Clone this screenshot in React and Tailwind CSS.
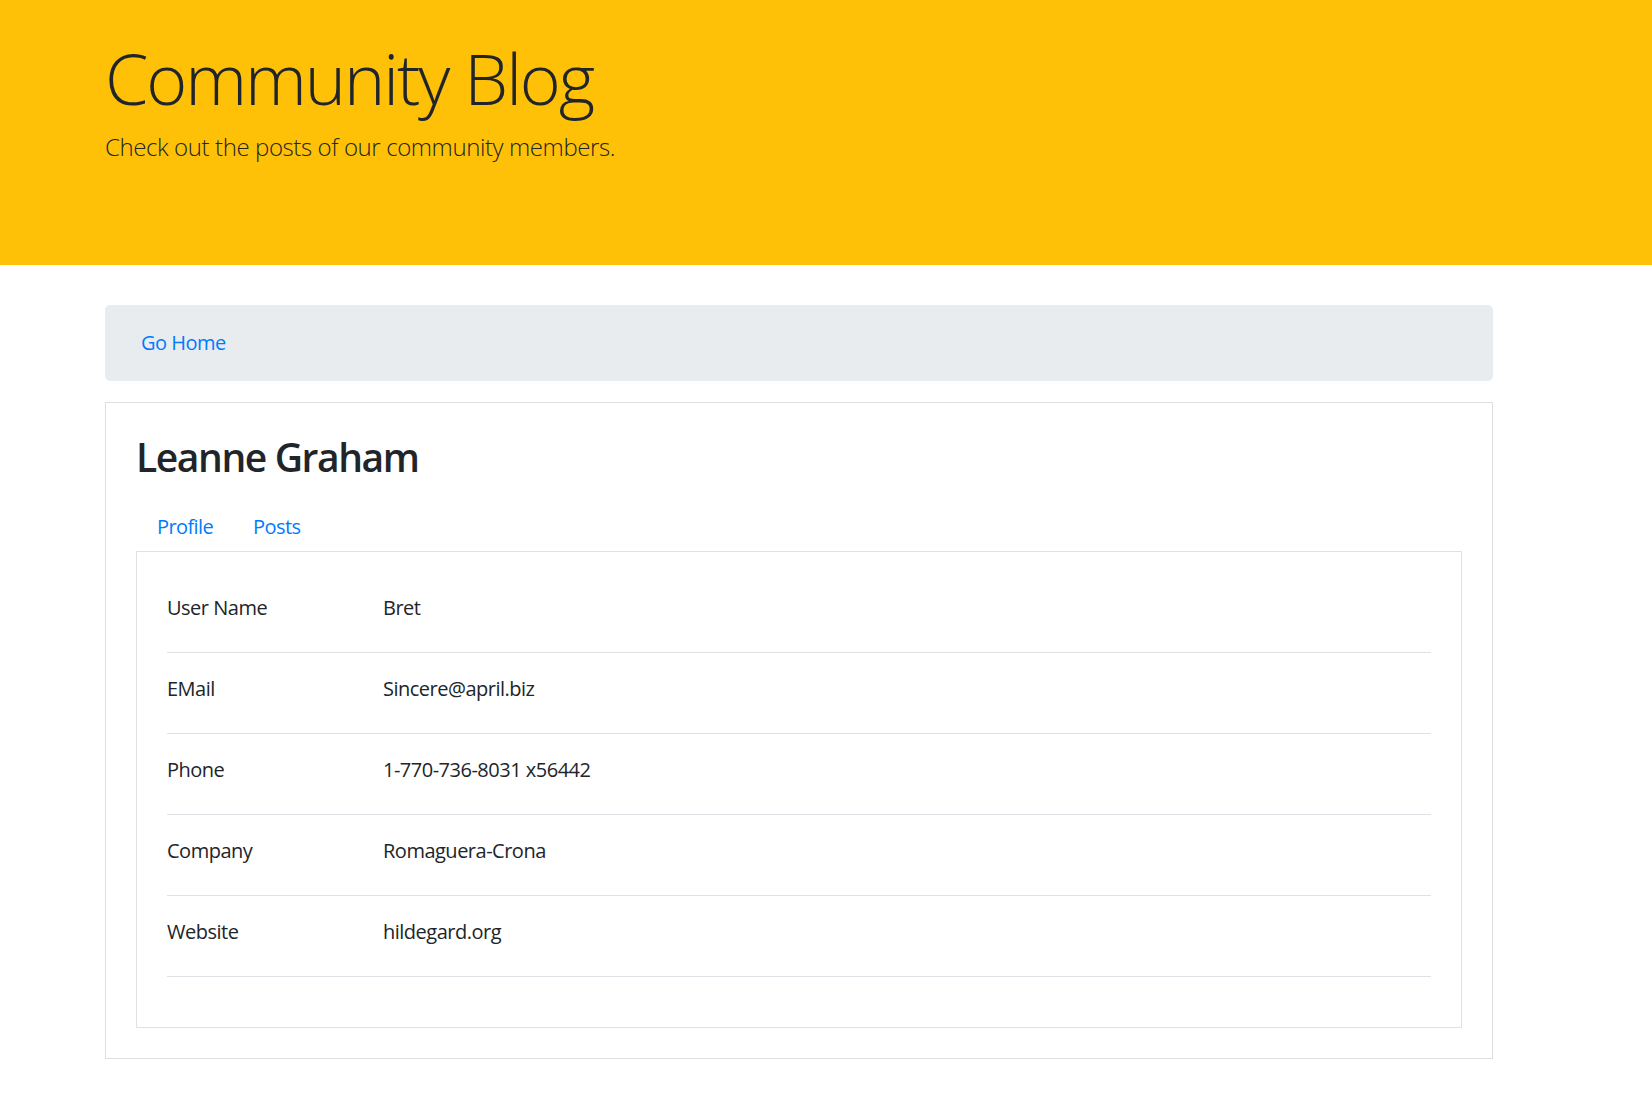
import React from "react";

const rows = [
  ["User Name", "Bret"],
  ["EMail", "Sincere@april.biz"],
  ["Phone", "1-770-736-8031 x56442"],
  ["Company", "Romaguera-Crona"],
  ["Website", "hildegard.org"],
];

export default function App() {
  return (
    <div
      className="min-h-screen bg-white text-[#212529]"
      style={{ fontFamily: '"Open Sans", "Noto Sans", sans-serif' }}
    >
      <header className="bg-[#ffc107] h-[265px] pl-[105px] pt-[36px]">
        <h1 className="text-[70px] font-light leading-[84px] tracking-[-2.1px]">
          Community Blog
        </h1>
        <p className="text-[24px] font-light leading-[37px] mt-[8px] tracking-[-0.4px]">
          Check out the posts of our community members.
        </p>
      </header>

      <main className="ml-[105px] w-[1388px] pt-[40px] pb-[40px]">
        <nav className="bg-[#e9ecef] rounded-[5px] h-[76px] flex items-center pl-[36px]">
          <a href="#" className="text-[#007bff] text-[20px] leading-[30px] tracking-[-0.5px]">
            Go Home
          </a>
        </nav>

        <section className="mt-[21px] border border-[#dfdfdf] p-[30px]">
          <h2 className="text-[39px] font-semibold leading-[48px] tracking-[-1.4px]">
            Leanne Graham
          </h2>
          <ul className="flex mt-[20px]">
            <li>
              <a href="#" className="block pl-[21px] pr-[20px] pt-[11px] pb-[9px] text-[20px] leading-[30px] text-[#007bff] tracking-[-0.6px]">
                Profile
              </a>
            </li>
            <li>
              <a href="#" className="block px-[20px] pt-[11px] pb-[9px] text-[20px] leading-[30px] text-[#007bff] tracking-[-0.6px]">
                Posts
              </a>
            </li>
          </ul>
          <div className="border border-[#dee2e6] pt-[20px] px-[30px] pb-[50px]">
            {rows.map(([k, v]) => (
              <div
                key={k}
                className="flex border-b border-[#dee2e6] pt-[21px] pb-[29px] text-[20px] leading-[30px] tracking-[-0.5px]"
              >
                <div className="w-[216px]">{k}</div>
                <div>{v}</div>
              </div>
            ))}
          </div>
        </section>
      </main>
    </div>
  );
}
